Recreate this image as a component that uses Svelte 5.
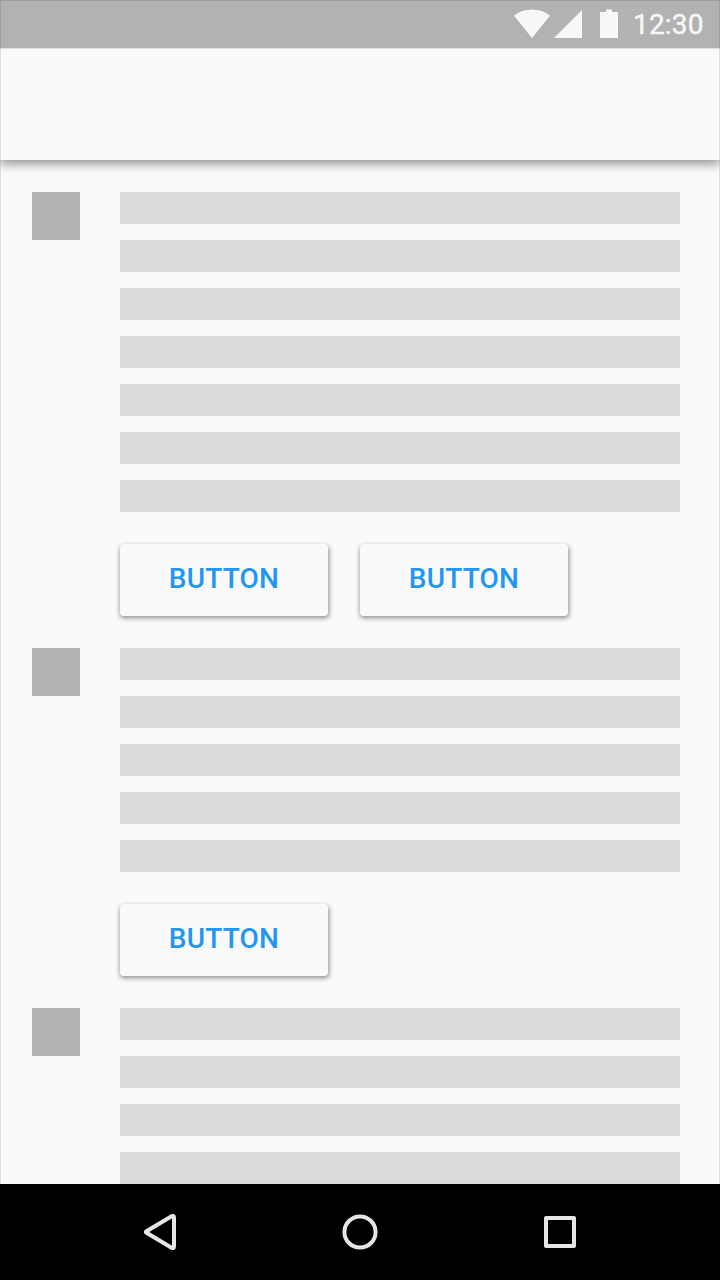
<script>
  const sections = [
    { lines: 7, buttons: 2 },
    { lines: 5, buttons: 1 },
    { lines: 4, buttons: 0 },
  ];
</script>

<div class="screen">
  <header class="status">
    <svg class="wifi" width="36" height="29" viewBox="0 0 36 29">
      <path d="M0 6.8C5 2.6 11.2.6 18 .6S31 2.6 36 6.8L18 29Z" />
    </svg>
    <svg class="signal" width="28" height="28" viewBox="0 0 28 28"><path d="M0 28L28 0V28Z" /></svg>
    <svg class="battery" width="18" height="29" viewBox="0 0 18 29">
      <path d="M6 .6H12V3H18V29H0V3H6Z" />
    </svg>
    <span class="time">12:30</span>
  </header>
  <div class="appbar"></div>
  <main>
    {#each sections as section}
      <section>
        <div class="avatar"></div>
        <div class="body">
          {#each Array(section.lines) as _}
            <div class="line"></div>
          {/each}
          {#if section.buttons}
            <div class="actions">
              {#each Array(section.buttons) as _}
                <button>BUTTON</button>
              {/each}
            </div>
          {/if}
        </div>
      </section>
    {/each}
  </main>
  <nav>
    <svg width="40" height="40" viewBox="0 0 40 40"><path d="M6.5 19.2L31.6 4.2Q34 3.2 34 5.6V34.4Q34 36.8 31.6 35.8L6.5 20.8Q5.2 20 6.5 19.2Z" /></svg>
    <svg width="40" height="40" viewBox="0 0 40 40"><circle cx="20" cy="20" r="15.6" /></svg>
    <svg width="40" height="40" viewBox="0 0 40 40"><path d="M6 6H34V34H6Z" /></svg>
  </nav>
  <div class="frame"></div>
</div>

<style>
  .screen {
    position: relative;
    display: flex;
    flex-direction: column;
    width: 720px;
    height: 1280px;
    overflow: hidden;
    background: #fafafa;
    font-family: Roboto, sans-serif;
  }
  .status {
    display: flex;
    box-sizing: border-box;
    flex: none;
    height: 48px;
    padding: 9px 16px 0 514px;
    background: #b2b2b2;
    fill: #f7f7f7;
    color: #f7f7f7;
  }
  svg {
    display: block;
    flex: none;
  }
  .signal {
    margin: 1px 18px 0 4px;
  }
  .time {
    margin-left: 15px;
    font-size: 28px;
    letter-spacing: 0.2px;
    line-height: 32px;
    white-space: nowrap;
    -webkit-text-stroke: 0.4px #f7f7f7;
  }
  .appbar {
    position: relative;
    z-index: 1;
    flex: none;
    height: 112px;
    background: #fafafa;
    box-shadow: 0 4px 10px rgba(0, 0, 0, 0.42), inset 0 1px rgba(0, 0, 0, 0.1);
    clip-path: inset(0 0 -24px);
  }
  main {
    display: flex;
    flex: 1;
    flex-direction: column;
    gap: 32px;
    min-height: 0;
    padding: 32px 40px 0 32px;
    overflow: hidden;
  }
  section {
    display: flex;
    flex: none;
    gap: 40px;
  }
  .avatar {
    width: 48px;
    height: 48px;
    background: #b2b2b2;
  }
  .body {
    display: flex;
    flex: 1;
    flex-direction: column;
    gap: 16px;
  }
  .line {
    height: 32px;
    background: #dcdcdc;
  }
  .actions {
    display: flex;
    gap: 32px;
    padding-top: 16px;
  }
  button {
    width: 208px;
    height: 72px;
    padding: 0 0 3px;
    border: 0;
    border-radius: 4px;
    background: #fafafa;
    box-shadow: 0.6px 2px 5px rgba(0, 0, 0, 0.44);
    color: #2196f3;
    font: 500 28px/32px Roboto, sans-serif;
    letter-spacing: 0.2px;
  }
  nav {
    display: flex;
    flex: none;
    align-items: center;
    gap: 160px;
    height: 96px;
    padding-left: 140px;
    background: #000;
    fill: none;
    stroke: #e6e6e6;
    stroke-width: 4;
    stroke-linejoin: round;
  }
  .frame {
    position: absolute;
    z-index: 2;
    inset: 0;
    border: 1px solid rgba(0, 0, 0, 0.11);
    pointer-events: none;
  }
</style>
